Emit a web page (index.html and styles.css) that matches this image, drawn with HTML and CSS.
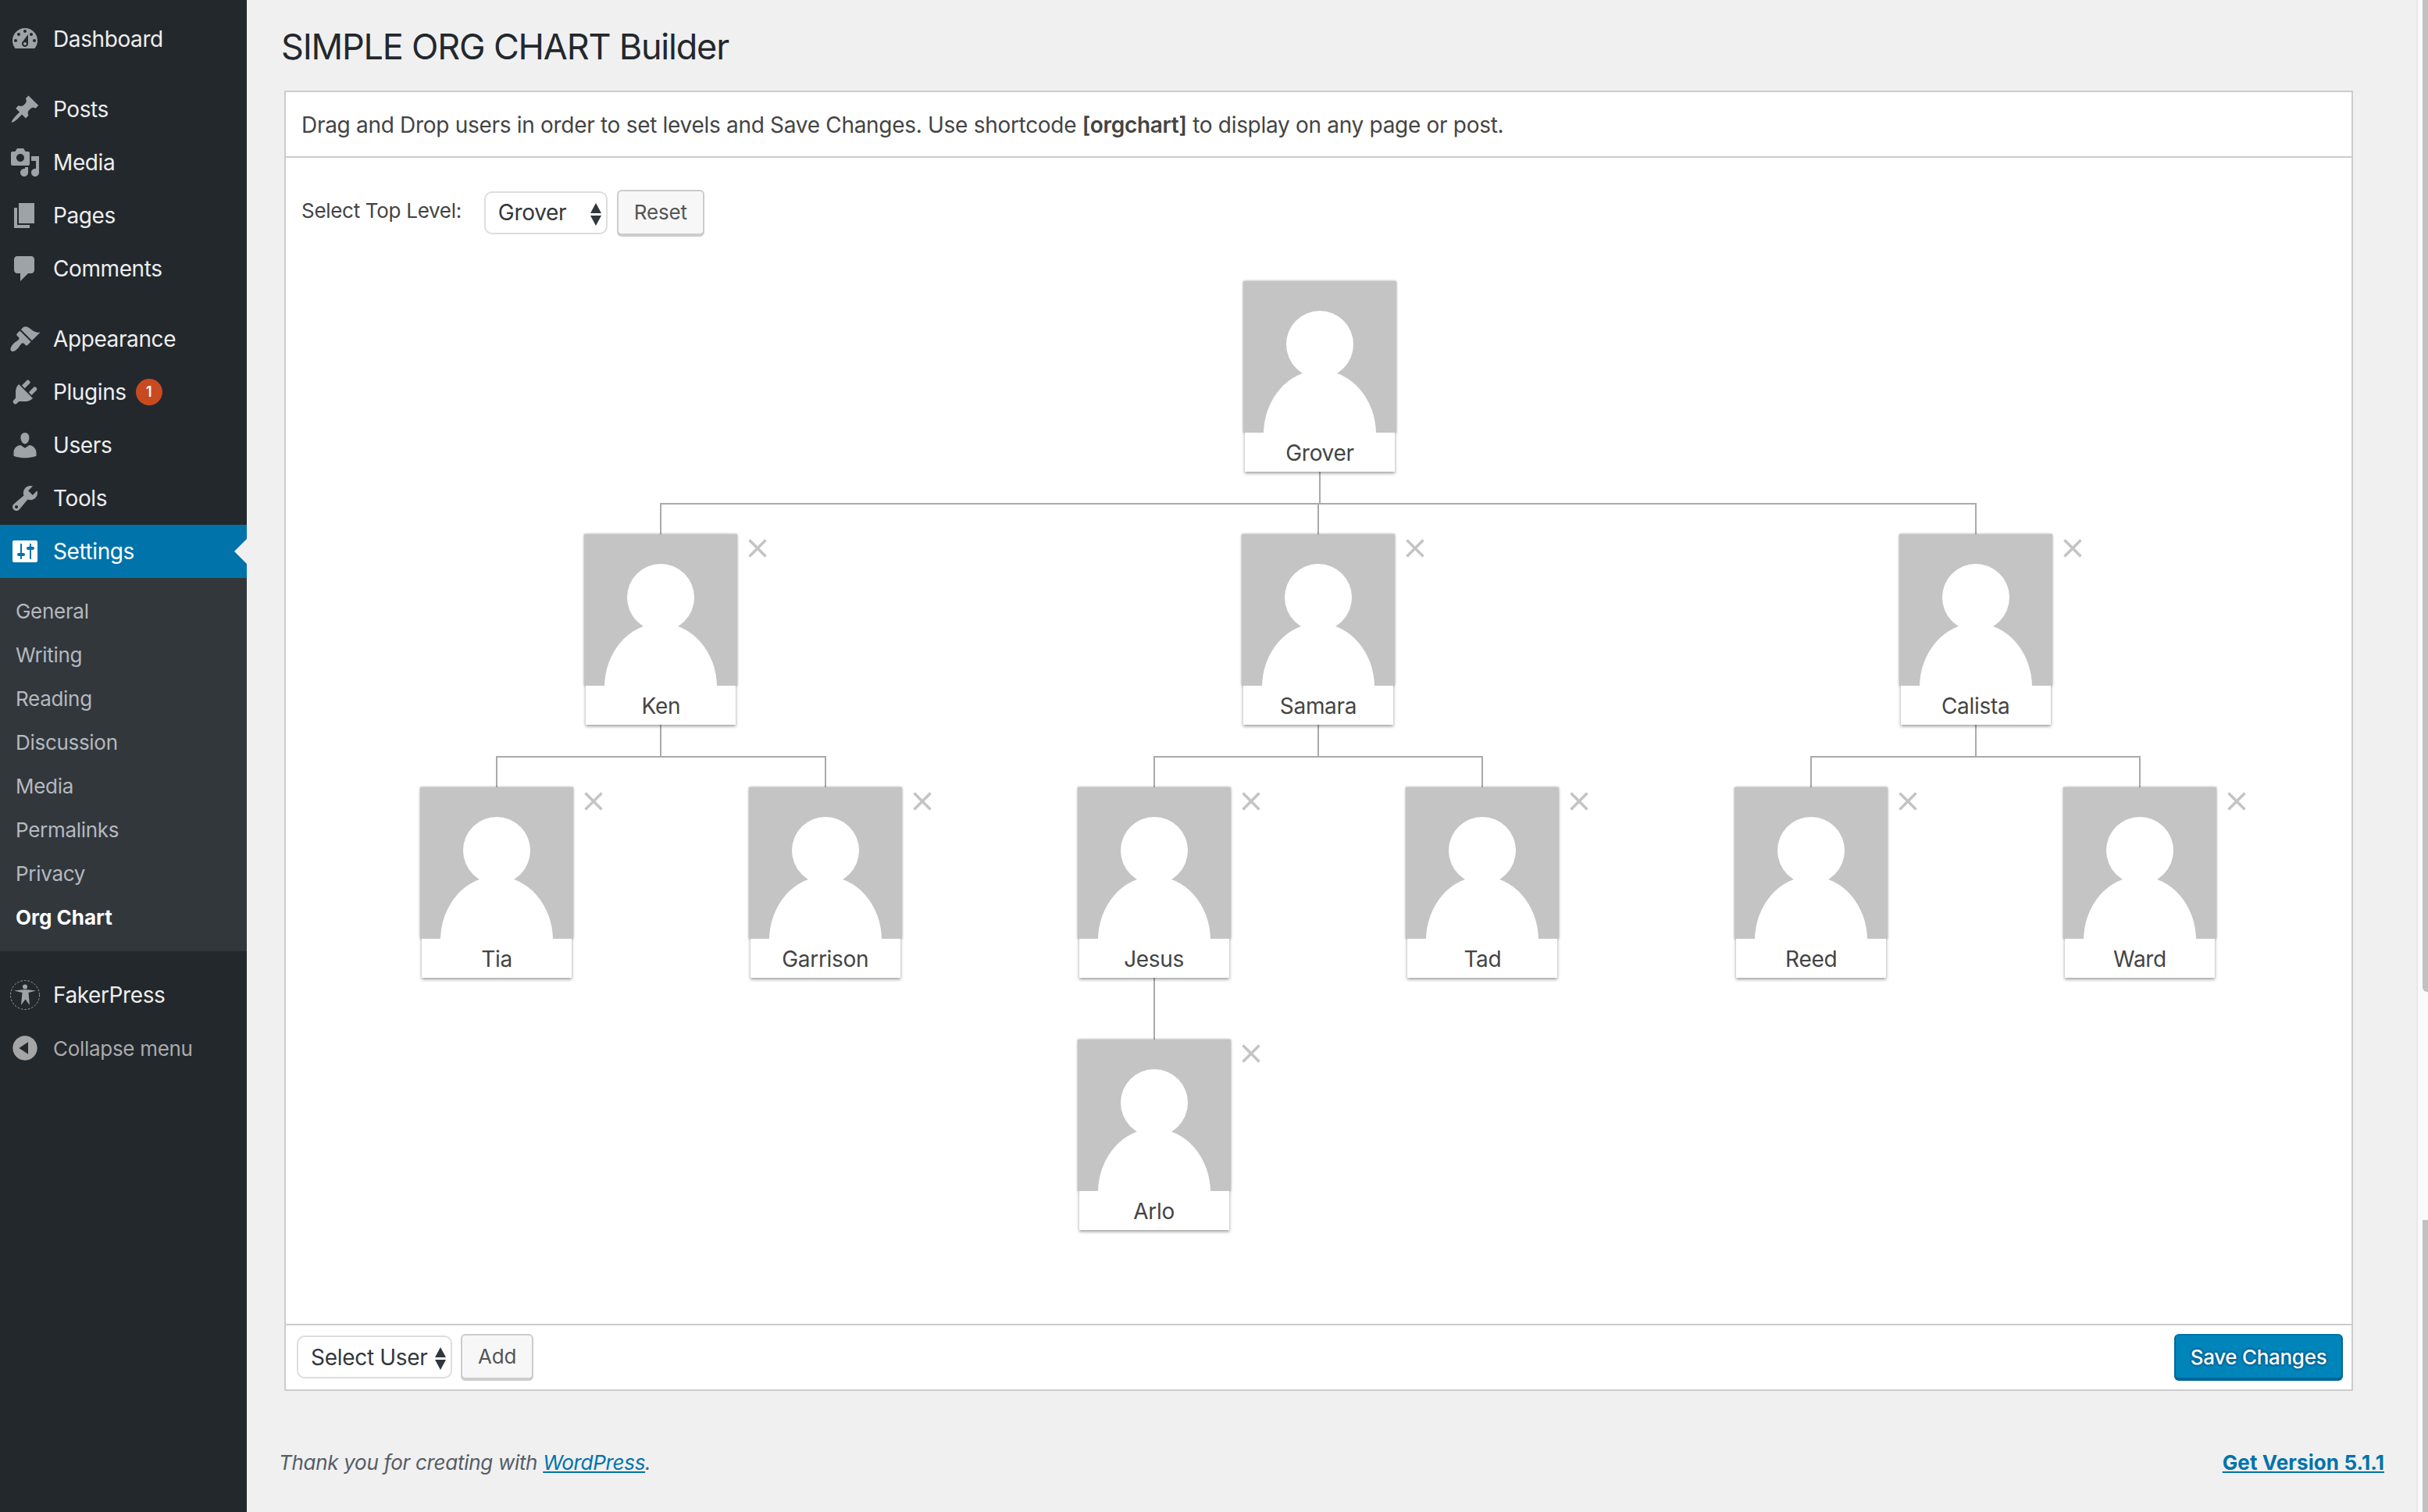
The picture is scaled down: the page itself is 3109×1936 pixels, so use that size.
FILE: index.html
```html
<!DOCTYPE html>
<html lang="en">
<head>
    <meta charset="UTF-8">
    <title>Org Chart - WordPress</title>
    <link rel="stylesheet" href="styles.css">
</head>
<body>

<svg class="icon-sprites" aria-hidden="true">
    <symbol id="person" viewBox="0 0 196 194">
        <circle cx="98" cy="81" r="43" fill="#fff"/>
        <ellipse cx="98" cy="196" rx="72" ry="82" fill="#fff"/>
    </symbol>
    <symbol id="cross" viewBox="0 0 24 24">
        <path d="M1.500 1.500l21 21M22.500 1.500l-21 21" stroke="#c4c4c4" stroke-width="3.600" fill="none"/>
    </symbol>
</svg>

<nav class="sidebar">
    <ul class="menu">
        <li class="menu-item">
            <svg class="menu-icon" viewBox="0 0 20 20"><path d="M3.76 16h12.48c1.1-1.37 1.76-3.11 1.76-5 0-4.42-3.58-8-8-8s-8 3.58-8 8c0 1.89.66 3.63 1.76 5zM10 4c.55 0 1 .45 1 1s-.45 1-1 1-1-.45-1-1 .45-1 1-1zM6 6c.55 0 1 .45 1 1s-.45 1-1 1-1-.45-1-1 .45-1 1-1zm8 0c.55 0 1 .45 1 1s-.45 1-1 1-1-.45-1-1 .45-1 1-1zm-5.37 5.55L12 7v6c0 1.1-.9 2-2 2s-2-.9-2-2c0-.57.24-1.08.63-1.45zM4 10c.55 0 1 .45 1 1s-.45 1-1 1-1-.45-1-1 .45-1 1-1zm12 0c.55 0 1 .45 1 1s-.45 1-1 1-1-.45-1-1 .45-1 1-1zm-5 3c0-.55-.45-1-1-1s-1 .45-1 1 .45 1 1 1 1-.45 1-1z" fill-rule="evenodd"/></svg>
            <span>Dashboard</span>
        </li>
    </ul>
    <ul class="menu">
        <li class="menu-item">
            <svg class="menu-icon" viewBox="0 0 20 20"><path d="M10.44 3.02l1.82-1.82 6.36 6.35-1.83 1.82c-1.05-.68-2.48-.57-3.41.36l-.75.75c-.92.93-1.04 2.35-.35 3.41l-1.83 1.82-2.41-2.41-2.8 2.79c-.42.42-3.38 2.71-3.8 2.29s1.86-3.39 2.28-3.81l2.79-2.79L4.1 9.36l1.83-1.82c1.05.69 2.48.57 3.4-.36l.75-.75c.93-.92 1.05-2.35.36-3.41z"/></svg>
            <span>Posts</span>
        </li>
        <li class="menu-item">
            <svg class="menu-icon" viewBox="0 0 20 20"><path d="M13 11V4c0-.55-.45-1-1-1h-1.67L9 1H5L3.67 3H2c-.55 0-1 .45-1 1v7c0 .55.45 1 1 1h10c.55 0 1-.45 1-1zM7 4.5c1.38 0 2.5 1.12 2.5 2.5S8.38 9.5 7 9.5 4.5 8.38 4.5 7 5.62 4.5 7 4.5zM14 6h5v10.5c0 1.38-1.12 2.5-2.5 2.5S14 17.88 14 16.5s1.12-2.5 2.5-2.5c.17 0 .34.02.5.05V9h-3V6zm-4 8.05V13h2v3.5c0 1.38-1.12 2.5-2.5 2.5S7 17.88 7 16.5 8.12 14 9.5 14c.17 0 .34.02.5.05z" fill-rule="evenodd"/></svg>
            <span>Media</span>
        </li>
        <li class="menu-item">
            <svg class="menu-icon" viewBox="0 0 20 20"><path d="M6 15V2h10v13H6zm-1 1h8v2H3V5h2v11z"/></svg>
            <span>Pages</span>
        </li>
        <li class="menu-item">
            <svg class="menu-icon" viewBox="0 0 20 20"><path d="M5 2h9c1.1 0 2 .9 2 2v7c0 1.1-.9 2-2 2h-2l-5 5v-5H5c-1.1 0-2-.9-2-2V4c0-1.1.9-2 2-2z"/></svg>
            <span>Comments</span>
        </li>
    </ul>
    <ul class="menu">
        <li class="menu-item">
            <svg class="menu-icon" viewBox="0 0 20 20"><path d="M14.48 11.06L7.41 3.99l1.5-1.5c.5-.56 2.3-.47 3.51.32 1.21.8 1.43 1.28 2.91 2.1 1.18.64 2.45 1.26 4.45.85zm-.71.71L6.7 4.7 4.93 6.47c-.39.39-.39 1.02 0 1.41l1.06 1.06c.39.39.39 1.03 0 1.42-.6.6-1.43 1.11-2.21 1.69-.35.26-.7.53-1.01.84-1.34 1.34-2.62 3.36-1.71 4.66.91 1.3 2.99-.2 4.25-1.46.31-.31.58-.66.84-1.01.58-.78 1.09-1.6 1.69-2.21.39-.39 1.02-.39 1.41 0l1.06 1.06c.39.39 1.02.39 1.41 0z"/></svg>
            <span>Appearance</span>
        </li>
        <li class="menu-item">
            <svg class="menu-icon" viewBox="0 0 20 20"><path d="M13.11 4.36L9.87 7.6 8 5.73l3.24-3.24c.35-.34 1.05-.2 1.56.32.52.51.66 1.21.31 1.55zm-8 1.77l.91-1.12 9.01 9.01-1.19.84c-.71.71-2.63 1.16-3.82 1.16H6.14L4.9 17.26c-.59.59-1.54.59-2.12 0-.59-.58-.59-1.53 0-2.12l1.24-1.24v-3.88c0-1.13.4-3.19 1.09-3.89zm7.26 3.97l3.24-3.24c.34-.35 1.04-.21 1.55.31.52.51.66 1.21.31 1.55l-3.24 3.25z"/></svg>
            <span>Plugins</span>
            <span class="count">1</span>
        </li>
        <li class="menu-item">
            <svg class="menu-icon" viewBox="0 0 20 20"><path d="M10 9.25c-2.27 0-2.73-3.44-2.73-3.44C7 4.02 7.82 2 9.97 2c2.16 0 2.98 2.02 2.71 3.81 0 0-.41 3.44-2.68 3.44zm0 2.57L12.72 10c2.39 0 4.52 2.33 4.52 4.53v2.49s-3.65 1.13-7.24 1.13c-3.65 0-7.24-1.13-7.24-1.13v-2.49c0-2.25 1.94-4.48 4.47-4.48z"/></svg>
            <span>Users</span>
        </li>
        <li class="menu-item">
            <svg class="menu-icon" viewBox="0 0 20 20"><path d="M16.68 9.77c-1.34 1.34-3.3 1.67-4.95.99l-5.41 6.52c-.99.99-2.59.99-3.58 0s-.99-2.59 0-3.57l6.52-5.42c-.68-1.65-.35-3.61.99-4.95 1.28-1.28 3.12-1.62 4.72-1.06l-2.89 2.89 2.82 2.82 2.86-2.87c.53 1.58.18 3.39-1.08 4.65zM3.81 16.21c.4.39 1.04.39 1.43 0 .4-.4.4-1.04 0-1.43-.39-.4-1.03-.4-1.43 0-.39.39-.39 1.03 0 1.43z" fill-rule="evenodd"/></svg>
            <span>Tools</span>
        </li>
        <li class="menu-item active">
            <svg class="menu-icon" viewBox="0 0 20 20"><path d="M18 16V4c0-.55-.45-1-1-1H3c-.55 0-1 .45-1 1v12c0 .55.45 1 1 1h14c.55 0 1-.45 1-1zM8 11h1c.55 0 1 .45 1 1s-.45 1-1 1H8v1.5c0 .28-.22.5-.5.5s-.5-.22-.5-.5V13H6c-.55 0-1-.45-1-1s.45-1 1-1h1V5.5c0-.28.22-.5.5-.5s.5.22.5.5V11zm5-2h-1c-.55 0-1-.45-1-1s.45-1 1-1h1V5.5c0-.28.22-.5.5-.5s.5.22.5.5V7h1c.55 0 1 .45 1 1s-.45 1-1 1h-1v5.5c0 .28-.22.5-.5.5s-.5-.22-.5-.5V9z" fill-rule="evenodd"/></svg>
            <span>Settings</span>
        </li>
    </ul>
    <ul class="submenu">
        <li>General</li>
        <li>Writing</li>
        <li>Reading</li>
        <li>Discussion</li>
        <li>Media</li>
        <li>Permalinks</li>
        <li>Privacy</li>
        <li class="current">Org Chart</li>
    </ul>
    <ul class="menu">
        <li class="menu-item">
            <svg class="menu-icon" viewBox="0 0 40 40">
                <circle class="dashed-ring" cx="20" cy="20" r="18.500"/>
                <circle cx="20" cy="9.500" r="3"/>
                <path d="M6 14.500l11-1.200h6l11 1.200-9.500 2.500 1.500 16-5.500-7.500-5.500 7.500 1.500-16z"/>
            </svg>
            <span>FakerPress</span>
        </li>
        <li class="menu-item collapse">
            <svg class="menu-icon" viewBox="0 0 20 20"><path d="M10 2.160c4.330 0 7.840 3.510 7.840 7.840s-3.510 7.840-7.840 7.840S2.160 14.330 2.160 10 5.710 2.160 10 2.160zm2 11.720V6.120L6.180 9.970z"/></svg>
            <span>Collapse menu</span>
        </li>
    </ul>
</nav>

<main class="content">
    <h1>SIMPLE ORG CHART Builder</h1>

    <section class="builder">
        <div class="builder-intro">
            Drag and Drop users in order to set levels and Save Changes. Use shortcode <strong>[orgchart]</strong> to display on any page or post.
        </div>

        <div class="builder-controls">
            <label class="control-label">Select Top Level:</label>
            <span class="select-wrap">
                <select class="select-top"><option>Grover</option></select>
            </span>
            <button class="button">Reset</button>
        </div>

        <!-- chart tree -->
        <div class="tree">
            <div class="branch root">
                <div class="node">
                    <svg class="node-photo"><use href="#person"/></svg>
                    <div class="node-name">Grover</div>
                </div>
                <div class="stem"></div>
                <div class="children">
                    <div class="branch">
                        <div class="stem"></div>
                        <div class="node">
                            <svg class="node-photo"><use href="#person"/></svg>
                            <div class="node-name">Ken</div>
                            <svg class="node-remove"><use href="#cross"/></svg>
                        </div>
                        <div class="stem"></div>
                        <div class="children">
                            <div class="branch leaf">
                                <div class="stem"></div>
                                <div class="node">
                                    <svg class="node-photo"><use href="#person"/></svg>
                                    <div class="node-name">Tia</div>
                                    <svg class="node-remove"><use href="#cross"/></svg>
                                </div>
                            </div>
                            <div class="branch leaf">
                                <div class="stem"></div>
                                <div class="node">
                                    <svg class="node-photo"><use href="#person"/></svg>
                                    <div class="node-name">Garrison</div>
                                    <svg class="node-remove"><use href="#cross"/></svg>
                                </div>
                            </div>
                        </div>
                    </div>
                    <div class="branch">
                        <div class="stem"></div>
                        <div class="node">
                            <svg class="node-photo"><use href="#person"/></svg>
                            <div class="node-name">Samara</div>
                            <svg class="node-remove"><use href="#cross"/></svg>
                        </div>
                        <div class="stem"></div>
                        <div class="children">
                            <div class="branch leaf">
                                <div class="stem"></div>
                                <div class="node">
                                    <svg class="node-photo"><use href="#person"/></svg>
                                    <div class="node-name">Jesus</div>
                                    <svg class="node-remove"><use href="#cross"/></svg>
                                </div>
                                <div class="stem"></div>
                                <div class="children">
                                    <div class="branch leaf">
                                        <div class="stem"></div>
                                        <div class="node">
                                            <svg class="node-photo"><use href="#person"/></svg>
                                            <div class="node-name">Arlo</div>
                                            <svg class="node-remove"><use href="#cross"/></svg>
                                        </div>
                                    </div>
                                </div>
                            </div>
                            <div class="branch leaf">
                                <div class="stem"></div>
                                <div class="node">
                                    <svg class="node-photo"><use href="#person"/></svg>
                                    <div class="node-name">Tad</div>
                                    <svg class="node-remove"><use href="#cross"/></svg>
                                </div>
                            </div>
                        </div>
                    </div>
                    <div class="branch">
                        <div class="stem"></div>
                        <div class="node">
                            <svg class="node-photo"><use href="#person"/></svg>
                            <div class="node-name">Calista</div>
                            <svg class="node-remove"><use href="#cross"/></svg>
                        </div>
                        <div class="stem"></div>
                        <div class="children">
                            <div class="branch leaf">
                                <div class="stem"></div>
                                <div class="node">
                                    <svg class="node-photo"><use href="#person"/></svg>
                                    <div class="node-name">Reed</div>
                                    <svg class="node-remove"><use href="#cross"/></svg>
                                </div>
                            </div>
                            <div class="branch leaf">
                                <div class="stem"></div>
                                <div class="node">
                                    <svg class="node-photo"><use href="#person"/></svg>
                                    <div class="node-name">Ward</div>
                                    <svg class="node-remove"><use href="#cross"/></svg>
                                </div>
                            </div>
                        </div>
                    </div>
                </div>
            </div>
        </div>

        <div class="builder-footer">
            <div class="footer-left">
                <span class="select-wrap">
                    <select class="select-user"><option>Select User</option></select>
                </span>
                <button class="button">Add</button>
            </div>
            <button class="button button-primary">Save Changes</button>
        </div>
    </section>

    <footer class="page-footer">
        <span class="thanks">Thank you for creating with <a href="#">WordPress</a>.</span>
        <a href="#" class="version">Get Version 5.1.1</a>
    </footer>
</main>

<div class="scrollbar">
    <div class="thumb thumb-top"></div>
    <div class="thumb-gap"></div>
    <div class="thumb"></div>
</div>

</body>
</html>
```

FILE: styles.css
```css
* {
    box-sizing: border-box;
}

html, body {
    height: 100%;
}

body {
    margin: 0;
    height: 1936px;
    overflow: hidden;
    display: flex;
    font-family: Inter, "Liberation Sans", sans-serif;
    letter-spacing: -0.3px;
    background-color: #f0f0f0;
    color: #444;
}

.icon-sprites {
    display: none;
}

/* Sidebar */
.sidebar {
    width: 316px;
    flex: none;
    padding-top: 16px;
    background-color: #23282d;
}

.menu, .submenu {
    list-style: none;
    margin: 0;
    padding: 0;
}

.menu {
    margin-bottom: 22px;
}

.menu-item {
    position: relative;
    height: 68px;
    display: flex;
    align-items: center;
    gap: 16px;
    padding-left: 12px;
    font-size: 28px;
    letter-spacing: -0.4px;
    color: #eee;
}

.menu-icon {
    width: 40px;
    height: 40px;
    flex: none;
    fill: #9ea3a8;
}

.dashed-ring {
    fill: none;
    stroke: #9ea3a8;
    stroke-width: 1;
    stroke-dasharray: 2.500 2;
}

.count {
    width: 34px;
    height: 34px;
    margin-left: -4px;
    border-radius: 50%;
    background-color: #ca4a1f;
    color: #fff;
    font-size: 18px;
    font-weight: 600;
    line-height: 34px;
    text-align: center;
}

.menu-item.active {
    background-color: #0073aa;
    color: #fff;
}

.menu-item.active .menu-icon {
    fill: #fff;
}

.menu-item.active::after {
    content: "";
    position: absolute;
    right: 0;
    top: 18px;
    border: 16px solid transparent;
    border-left: 0;
    border-right-color: #f0f0f0;
}

.menu-item.collapse {
    font-size: 26px;
    letter-spacing: -0.3px;
    color: #aaa;
}

.menu-item.collapse .menu-icon {
    fill: #a5a5a5;
}

.submenu {
    padding: 14px 0 16px;
    margin-top: -22px;
    margin-bottom: 22px;
    background-color: #32373c;
}

.submenu li {
    height: 56px;
    padding-left: 20px;
    font-size: 26px;
    line-height: 58px;
    color: #b4b9be;
}

.submenu li.current {
    color: #fff;
    font-weight: 700;
    letter-spacing: 0;
}

/* Main */
.content {
    flex: 1;
    min-width: 0;
    padding: 0 41px 0 44px;
}

h1 {
    margin: 0;
    padding-top: 32px;
    height: 116px;
    font-size: 45px;
    font-weight: 400;
    line-height: 56px;
    letter-spacing: -1.2px;
    color: #23282d;
}

.builder {
    margin: 0 40px 0 4px;
    height: 1665px;
    display: flex;
    flex-direction: column;
    background-color: #fff;
    border: 2px solid #ccc;
}

.builder-intro {
    height: 84px;
    padding-left: 20px;
    border-bottom: 2px solid #ccc;
    font-size: 28px;
    line-height: 84px;
    color: #444;
}

.builder-intro strong {
    font-weight: 600;
}

.builder-controls {
    height: 58px;
    margin-top: 41px;
    padding-left: 20px;
    display: flex;
    align-items: center;
    gap: 12px;
}

.control-label {
    margin-right: 17px;
    margin-top: -6px;
    font-size: 26px;
    color: #444;
}

.select-wrap {
    position: relative;
    display: inline-block;
}

.select-wrap::before, .select-wrap::after {
    content: "";
    position: absolute;
    right: 8px;
    border: 7px solid transparent;
    border-top: 0;
    border-bottom: 13px solid #32373c;
    pointer-events: none;
}

.select-wrap::before {
    top: 15px;
}

.select-wrap::after {
    top: 31px;
    border-bottom: 0;
    border-top: 13px solid #32373c;
}

select {
    display: block;
    height: 55px;
    padding: 0 0 0 16px;
    appearance: none;
    -webkit-appearance: none;
    background: #fff;
    border: 2px solid #ddd;
    border-radius: 10px;
    font-family: inherit;
    font-size: 28px;
    letter-spacing: -0.3px;
    color: #32373c;
}

.select-top {
    width: 158px;
}

.select-user {
    width: 199px;
}

.button {
    height: 58px;
    padding: 0 20px 2px;
    background-color: #f7f7f7;
    border: 2px solid #ccc;
    border-radius: 6px;
    box-shadow: 0 2px 0 #ccc;
    font-family: inherit;
    font-size: 26px;
    letter-spacing: -0.2px;
    color: #555;
}

.button-primary {
    width: 216px;
    padding: 0;
    background-color: #0085ba;
    border-color: #0073aa #006799 #006799;
    box-shadow: 0 2px 0 #006799;
    color: #fff;
    font-weight: 500;
    letter-spacing: -0.3px;
    text-shadow: 0 -2px 2px #006799, 2px 0 2px #006799, 0 2px 2px #006799, -2px 0 2px #006799;
}

/* Chart: cells are as wide as the leaf level, parents center over them */
.tree {
    flex: 1;
    padding: 59px 1px 0 0;
    display: flex;
    justify-content: center;
}

.branch {
    position: relative;
    display: flex;
    flex-direction: column;
    align-items: center;
}

.branch.leaf {
    width: 420.800px;
}

.children {
    display: flex;
    align-items: flex-start;
}

.stem {
    width: 2px;
    height: 40px;
    flex: none;
    background-color: #aaa;
}

.leaf .leaf > .stem {
    height: 39px;
}

.children > .branch::before {
    content: "";
    position: absolute;
    top: 0;
    left: 0;
    right: 0;
    height: 2px;
    background-color: #aaa;
}

.children > .branch:first-child::before {
    left: 50%;
}

.children > .branch:last-child::before {
    right: 50%;
}

.children > .branch:only-child::before {
    display: none;
}

.root > .node, .root > .stem {
    margin-left: 4px;
}

.node {
    position: relative;
    width: 192px;
    height: 244px;
    flex: none;
    box-shadow: 0 2px 4px rgba(0, 0, 0, 0.4);
}

/* the photo is a little wider than the name strip under it */
.node-photo {
    display: block;
    width: 196px;
    height: 194px;
    margin: 0 -2px;
    background-color: #c4c4c4;
    box-shadow: 0 0 3px rgba(0, 0, 0, 0.3);
}

.node-name {
    position: relative;
    height: 50px;
    background-color: #fff;
    font-size: 28px;
    line-height: 53px;
    text-align: center;
    color: #444;
}

.node-remove {
    position: absolute;
    left: 208px;
    top: 6px;
    width: 24px;
    height: 24px;
}

.builder-footer {
    height: 84px;
    padding: 11px 11px 0 14px;
    display: flex;
    justify-content: space-between;
    align-items: flex-start;
    border-top: 2px solid #ccc;
}

.footer-left {
    display: flex;
    gap: 11px;
}

.footer-left .select-wrap {
    margin-top: 2px;
}

/* Page footer */
.page-footer {
    margin-top: 72px;
    margin-left: -3px;
    display: flex;
    justify-content: space-between;
    font-size: 26px;
    line-height: 40px;
    color: #555d66;
}

.thanks {
    font-style: italic;
}

.page-footer a {
    color: #0073aa;
}

.version {
    font-weight: 700;
    letter-spacing: 0.1px;
}

/* Scrollbar */
.scrollbar {
    width: 15px;
    flex: none;
    display: flex;
    flex-direction: column;
    padding-left: 6px;
    background-color: #fafafa;
    border-left: 2px solid #e8e8e8;
}

.thumb {
    flex: 1;
    background-color: #c1c1c1;
}

.thumb-top {
    flex: none;
    height: 1270px;
    border-bottom-left-radius: 6px;
}

.thumb-gap {
    flex: none;
    height: 292px;
}
```
